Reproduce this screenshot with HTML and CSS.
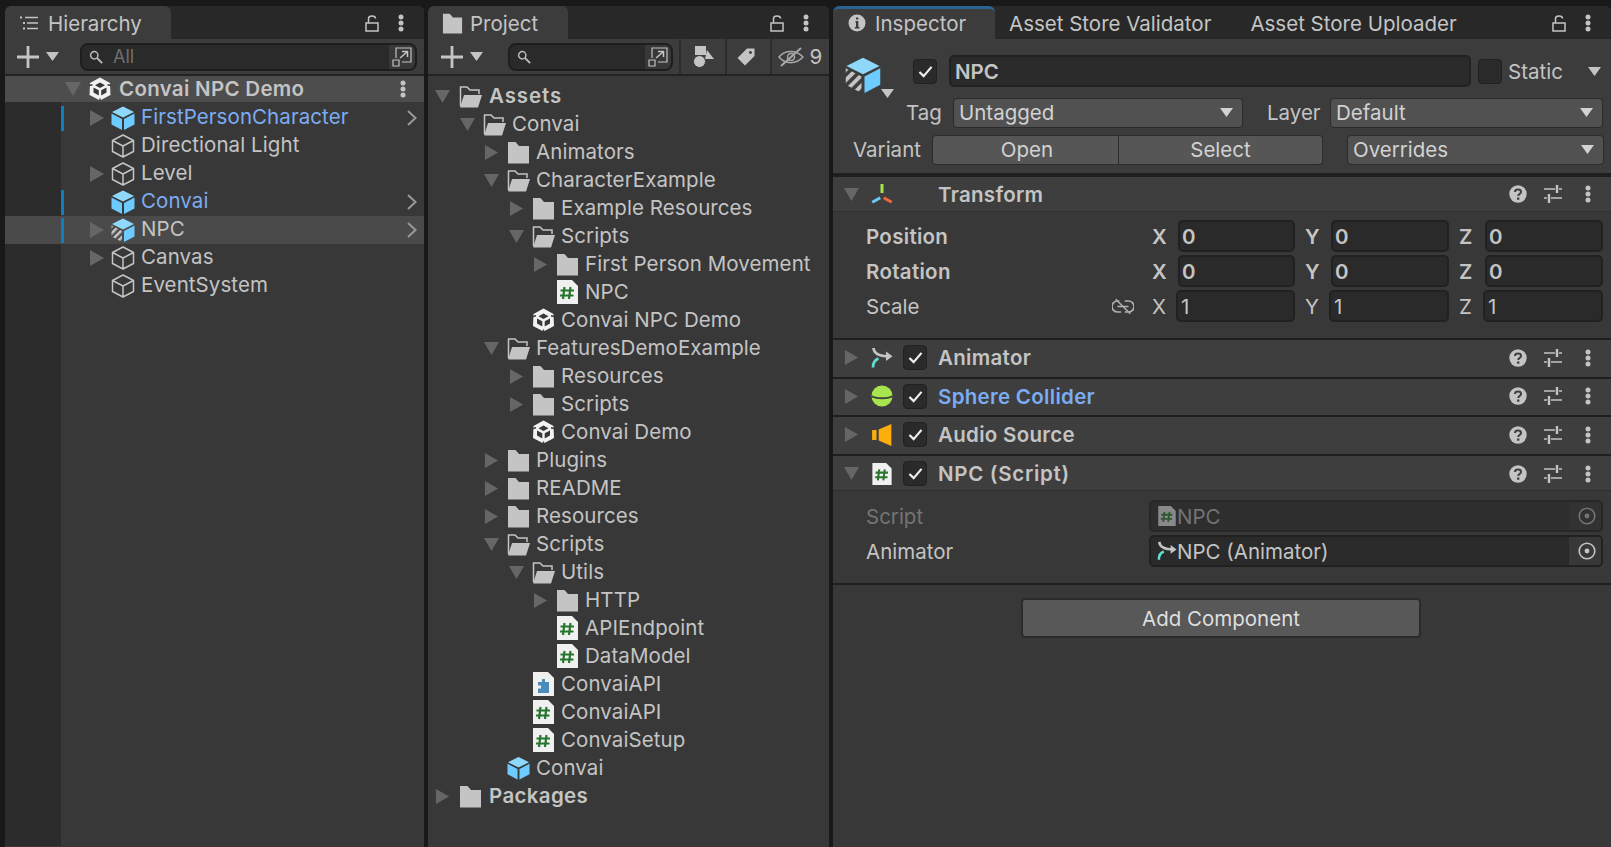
FILE: index.html
```html
<!DOCTYPE html>
<html lang="en">
<head>
  <meta charset="UTF-8">
  <title>Unity Editor</title>
  <link rel="stylesheet" href="styles.css">
</head>
<body>
  <svg class="defs" width="0" height="0">
    <defs>
      <pattern id="stripes" width="5" height="5" patternUnits="userSpaceOnUse" patternTransform="rotate(-45)">
        <rect width="5" height="2.6" fill="#c4c4c4"/>
      </pattern>
      <symbol id="cube" viewBox="0 0 24 24"><path d="M12 1 22.5 6.5V17.5L12 23 1.500 17.500V6.500ZM1.500 6.500 12 12 22.500 6.500M12 12V23" fill="none" stroke="currentColor" stroke-width="1.500" stroke-linejoin="round"/></symbol>
      <symbol id="cube-blue" viewBox="0 0 24 24"><path d="M12 .5 23 6 12 11.500 1 6Z" fill="#8ed9fb"/><path d="M.5 7.500 11 13V24L.5 18.500Z" fill="#6dcbff"/><path d="M23.500 7.500 13 13V24L23.500 18.500Z" fill="#6dcbff"/></symbol>
      <symbol id="cube-variant" viewBox="0 0 24 24"><path d="M12 .5 23 6 12 11.500 1 6Z" fill="#8ed9fb"/><path d="M.5 7.500 11 13V24L.5 18.500Z" fill="url(#stripes)"/><path d="M23.500 7.500 13 13V24L23.500 18.500Z" fill="#6dcbff"/></symbol>
      <symbol id="folder" viewBox="0 0 23 24"><path d="M1 2H8.500L12 6H22V23.500H1Z" fill="#c4c4c4"/></symbol>
      <symbol id="folder-open" viewBox="0 0 23 24"><path d="M1.500 22V3H8L11 6H20V10" fill="none" stroke="#c4c4c4" stroke-width="1.500"/><path d="M1 23.500 5 11H23L19 23.500Z" fill="#c4c4c4"/></symbol>
      <symbol id="script" viewBox="0 0 21 24"><path d="M0 0H15L21 6V24H0Z" fill="#f0f0f0"/><path d="M7.500 7 6 19M13.500 7 12 19M3.500 10.500H17M3 15.500H16.500" stroke="#27752f" stroke-width="2.200" fill="none"/></symbol>
      <symbol id="script-dim" viewBox="0 0 21 24"><path d="M0 0H15L21 6V24H0Z" fill="#8a8a8a"/><path d="M7.500 7 6 19M13.500 7 12 19M3.500 10.500H17M3 15.500H16.500" stroke="#2d5a33" stroke-width="2.200" fill="none"/></symbol>
      <symbol id="asmdef" viewBox="0 0 21 24"><path d="M0 0H15L21 6V24H0Z" fill="#f0f0f0"/><path d="M9 7H12V10H16V21H5V16.500H8V13.500H5V10H9Z" fill="#4c8cba"/></symbol>
      <symbol id="unity" viewBox="0 0 22 24"><path d="M11 .5 21 6 21.500 18 11 23.500.5 18 1 6Z" fill="#f2f2f2"/><path d="M11 5.500 6 8.300 11 11 16 8.300ZM4.500 10.500 9.800 13.300V18.500L4.500 15.500ZM17.500 10.500 12.200 13.300V18.500L17.500 15.500Z" fill="#383838"/><path d="M0 8.500 3.500 7.800M22 8.500 18.500 7.800M11 24V21.500" stroke="#383838" stroke-width="1.400"/></symbol>
      <symbol id="tri-right" viewBox="0 0 14 16"><path d="M0 0 14 8 0 16Z" fill="currentColor"/></symbol>
      <symbol id="tri-down" viewBox="0 0 16 14"><path d="M0 0H16L8 14Z" fill="currentColor"/></symbol>
      <symbol id="caret" viewBox="0 0 13 9"><path d="M0 0H13L6.500 9Z" fill="currentColor"/></symbol>
      <symbol id="chevron" viewBox="0 0 10 16"><path d="M1 1 8.500 8 1 15" fill="none" stroke="currentColor" stroke-width="2"/></symbol>
      <symbol id="kebab" viewBox="0 0 6 18"><circle cx="3" cy="3" r="2.500" fill="currentColor"/><circle cx="3" cy="9" r="2.500" fill="currentColor"/><circle cx="3" cy="15" r="2.500" fill="currentColor"/></symbol>
      <symbol id="lock" viewBox="0 0 14 18"><path d="M1 9H13V17H1ZM3.500 9V4.500C3.500 1 10.500 1 10.500 4.500" fill="none" stroke="currentColor" stroke-width="1.500"/></symbol>
      <symbol id="plus" viewBox="0 0 22 22"><path d="M11 0V22M0 11H22" stroke="currentColor" stroke-width="2.800"/></symbol>
      <symbol id="search" viewBox="0 0 16 16"><circle cx="6" cy="6" r="4.200" fill="none" stroke="currentColor" stroke-width="1.700"/><path d="M9 9 15 15" stroke="currentColor" stroke-width="2.200"/></symbol>
      <symbol id="popout" viewBox="0 0 20 20"><path d="M4 11V1H19V15H10" fill="none" stroke="currentColor" stroke-width="1.200"/><path d="M1 13H7V19H1Z" fill="none" stroke="currentColor" stroke-width="1.200"/><path d="M8 11 15 5M10 4.500H15.500V10" fill="none" stroke="currentColor" stroke-width="1.500"/></symbol>
      <symbol id="list" viewBox="0 0 18 14"><path d="M5 1.500H18M7 7H18M7 12.500H18" stroke="currentColor" stroke-width="1.500"/><path d="M0 .5H2V2.500H0ZM3 6H5V8H3ZM3 11.500H5V13.500H3Z" fill="currentColor"/></symbol>
      <symbol id="shapes" viewBox="0 0 21 22"><path d="M2 0H13V9H2Z" fill="currentColor"/><path d="M14 4 21 13H12Z" fill="currentColor"/><circle cx="6.500" cy="15.500" r="6" fill="currentColor" stroke="#3c3c3c"/></symbol>
      <symbol id="tag" viewBox="0 0 18 18"><path d="M10 .5H17.500V8L8 17.500.5 10Z" fill="currentColor"/><circle cx="13.500" cy="4.500" r="1.400" fill="#3c3c3c"/></symbol>
      <symbol id="eye-off" viewBox="0 0 26 22"><path d="M1 11C7 3.500 18 3.500 25 11 18 18.500 7 18.500 1 11Z" fill="none" stroke="currentColor" stroke-width="1.500"/><circle cx="13" cy="11" r="3.500" fill="none" stroke="currentColor" stroke-width="1.500"/><path d="M3 20 23 2" stroke="currentColor" stroke-width="2"/></symbol>
      <symbol id="info" viewBox="0 0 18 18"><circle cx="9" cy="9" r="8.500" fill="currentColor"/><path d="M7.500 7H10.300V13H11.500V14.500H6.800V13H8V8.500H7.500ZM8 3.500H10.300V5.600H8Z" fill="#3c3c3c"/></symbol>
      <symbol id="transform" viewBox="0 0 22 20"><path d="M9.500 0H12.500V9H9.500Z" fill="#a4e34a"/><path d="M.5 17 8.500 12.500 10 15 2 19.500Z" fill="#6dc9f5"/><path d="M21.500 17 13.500 12.500 12 15 20 19.500Z" fill="#f0673a"/></symbol>
      <symbol id="animator" viewBox="0 0 22 20"><path d="M2.500 0C3 6 8 8.300 18 8.300" fill="none" stroke="#c4c4c4" stroke-width="2.800"/><path d="M15 3.500 21.500 8.300 15 13Z" fill="#c4c4c4"/><path d="M2 19.500C2 15 3.500 12 7.500 10.500" fill="none" stroke="#5fe0d0" stroke-width="2.800"/></symbol>
      <symbol id="sphere" viewBox="0 0 22 22"><circle cx="11" cy="11" r="10.500" fill="#a8e44e"/><path d="M.5 11C4 14 18 14 21.500 11" fill="none" stroke="#3e3e3e" stroke-width="1.800"/></symbol>
      <symbol id="audio" viewBox="0 0 18 20"><path d="M0 5.500H4V14.500H0Z" fill="#fdae0b"/><path d="M6 5 17.500 0V20L6 15Z" fill="#fdae0b"/></symbol>
      <symbol id="help" viewBox="0 0 18 18"><circle cx="9" cy="9" r="8.700" fill="currentColor"/><path d="M6 7C6 3.800 12 3.800 12 7 12 9 9.200 9 9.200 11" fill="none" stroke="#3e3e3e" stroke-width="2"/><path d="M8 12.500H10.400V14.700H8Z" fill="#3e3e3e"/></symbol>
      <symbol id="sliders" viewBox="0 0 18 18"><path d="M0 4H11M15 4H18M0 13H3M7 13H18" stroke="currentColor" stroke-width="1.300"/><path d="M13 0V8M5 9V18" stroke="currentColor" stroke-width="2.400"/></symbol>
      <symbol id="link-off" viewBox="0 0 24 18"><path d="M8 3H6A6 6 0 0 0 6 15H10M14 15H18A6 6 0 0 0 18 3H14" fill="none" stroke="currentColor" stroke-width="1.800"/><path d="M6 9H18M4 1 20 17" stroke="currentColor" stroke-width="1.600"/></symbol>
      <symbol id="target" viewBox="0 0 18 18"><circle cx="9" cy="9" r="7.800" fill="none" stroke="currentColor" stroke-width="1.600"/><circle cx="9" cy="9" r="2.400" fill="currentColor"/></symbol>
      <symbol id="check" viewBox="0 0 16 14"><path d="M1.500 7.500 6 12 14.500 2" fill="none" stroke="#eee" stroke-width="2.400"/></symbol>
    </defs>
  </svg>

  <section class="panel hierarchy">
    <div class="tabbar">
      <div class="tab tab-h"><svg class="ic tab-ic-list"><use href="#list"/></svg>Hierarchy</div>
      <div class="tab-tools">
        <svg class="ic lock"><use href="#lock"/></svg>
        <svg class="ic kebab"><use href="#kebab"/></svg>
      </div>
    </div>
    <div class="toolbar">
      <svg class="ic plus"><use href="#plus"/></svg>
      <svg class="ic tri-sm"><use href="#caret"/></svg>
      <div class="searchbox sb-h">
        <svg class="ic search"><use href="#search"/></svg><span class="search-text">All</span>
        <div class="popout"><svg class="ic popout-ic"><use href="#popout"/></svg></div>
      </div>
    </div>
    <div class="h-tree">
      <div class="scene-row">
        <svg class="ic arrow dim"><use href="#tri-down"/></svg>
        <svg class="ic scene-ic"><use href="#unity"/></svg>
        <span class="bold">Convai NPC Demo</span>
        <svg class="ic kebab scene-kebab"><use href="#kebab"/></svg>
      </div>
      <div class="h-row"><i class="mark on"></i><svg class="ic arrow dim"><use href="#tri-right"/></svg><svg class="ic cube-ic"><use href="#cube-blue"/></svg><span class="name blue">FirstPersonCharacter</span><svg class="ic chev"><use href="#chevron"/></svg></div>
      <div class="h-row"><i class="mark"></i><span class="arrow"></span><svg class="ic cube-ic"><use href="#cube"/></svg><span class="name">Directional Light</span></div>
      <div class="h-row"><i class="mark"></i><svg class="ic arrow dim"><use href="#tri-right"/></svg><svg class="ic cube-ic"><use href="#cube"/></svg><span class="name">Level</span></div>
      <div class="h-row"><i class="mark on"></i><span class="arrow"></span><svg class="ic cube-ic"><use href="#cube-blue"/></svg><span class="name blue">Convai</span><svg class="ic chev"><use href="#chevron"/></svg></div>
      <div class="h-row hover"><i class="mark on"></i><svg class="ic arrow dim"><use href="#tri-right"/></svg><svg class="ic cube-ic"><use href="#cube-variant"/></svg><span class="name">NPC</span><svg class="ic chev"><use href="#chevron"/></svg></div>
      <div class="h-row"><i class="mark"></i><svg class="ic arrow dim"><use href="#tri-right"/></svg><svg class="ic cube-ic"><use href="#cube"/></svg><span class="name">Canvas</span></div>
      <div class="h-row"><i class="mark"></i><span class="arrow"></span><svg class="ic cube-ic"><use href="#cube"/></svg><span class="name">EventSystem</span></div>
    </div>
  </section>

  <section class="panel project">
    <div class="tabbar">
      <div class="tab tab-p"><svg class="ic tab-ic-folder"><use href="#folder"/></svg>Project</div>
      <div class="tab-tools">
        <svg class="ic lock"><use href="#lock"/></svg>
        <svg class="ic kebab"><use href="#kebab"/></svg>
      </div>
    </div>
    <div class="toolbar toolbar-p">
      <svg class="ic plus"><use href="#plus"/></svg>
      <svg class="ic tri-sm"><use href="#caret"/></svg>
      <div class="searchbox sb-p">
        <svg class="ic search"><use href="#search"/></svg>
        <div class="popout"><svg class="ic popout-ic"><use href="#popout"/></svg></div>
      </div>
      <div class="tool-btn tb-1"><svg class="ic shapes"><use href="#shapes"/></svg></div>
      <div class="tool-btn tb-2"><svg class="ic tag"><use href="#tag"/></svg></div>
      <div class="tool-btn tb-3"><svg class="ic eye"><use href="#eye-off"/></svg><span>9</span></div>
    </div>
    <div class="p-tree">
      <div class="p-row d0"><svg class="ic arrow dim"><use href="#tri-down"/></svg><svg class="ic file"><use href="#folder-open"/></svg><span class="name bold root">Assets</span></div>
      <div class="p-row d1"><svg class="ic arrow dim"><use href="#tri-down"/></svg><svg class="ic file"><use href="#folder-open"/></svg><span class="name">Convai</span></div>
      <div class="p-row d2"><svg class="ic arrow dim"><use href="#tri-right"/></svg><svg class="ic file"><use href="#folder"/></svg><span class="name">Animators</span></div>
      <div class="p-row d2"><svg class="ic arrow dim"><use href="#tri-down"/></svg><svg class="ic file"><use href="#folder-open"/></svg><span class="name">CharacterExample</span></div>
      <div class="p-row d3"><svg class="ic arrow dim"><use href="#tri-right"/></svg><svg class="ic file"><use href="#folder"/></svg><span class="name">Example Resources</span></div>
      <div class="p-row d3"><svg class="ic arrow dim"><use href="#tri-down"/></svg><svg class="ic file"><use href="#folder-open"/></svg><span class="name">Scripts</span></div>
      <div class="p-row d4"><svg class="ic arrow dim"><use href="#tri-right"/></svg><svg class="ic file"><use href="#folder"/></svg><span class="name">First Person Movement</span></div>
      <div class="p-row d4"><span class="arrow"></span><svg class="ic file"><use href="#script"/></svg><span class="name">NPC</span></div>
      <div class="p-row d3"><span class="arrow"></span><svg class="ic file"><use href="#unity"/></svg><span class="name">Convai NPC Demo</span></div>
      <div class="p-row d2"><svg class="ic arrow dim"><use href="#tri-down"/></svg><svg class="ic file"><use href="#folder-open"/></svg><span class="name">FeaturesDemoExample</span></div>
      <div class="p-row d3"><svg class="ic arrow dim"><use href="#tri-right"/></svg><svg class="ic file"><use href="#folder"/></svg><span class="name">Resources</span></div>
      <div class="p-row d3"><svg class="ic arrow dim"><use href="#tri-right"/></svg><svg class="ic file"><use href="#folder"/></svg><span class="name">Scripts</span></div>
      <div class="p-row d3"><span class="arrow"></span><svg class="ic file"><use href="#unity"/></svg><span class="name">Convai Demo</span></div>
      <div class="p-row d2"><svg class="ic arrow dim"><use href="#tri-right"/></svg><svg class="ic file"><use href="#folder"/></svg><span class="name">Plugins</span></div>
      <div class="p-row d2"><svg class="ic arrow dim"><use href="#tri-right"/></svg><svg class="ic file"><use href="#folder"/></svg><span class="name">README</span></div>
      <div class="p-row d2"><svg class="ic arrow dim"><use href="#tri-right"/></svg><svg class="ic file"><use href="#folder"/></svg><span class="name">Resources</span></div>
      <div class="p-row d2"><svg class="ic arrow dim"><use href="#tri-down"/></svg><svg class="ic file"><use href="#folder-open"/></svg><span class="name">Scripts</span></div>
      <div class="p-row d3"><svg class="ic arrow dim"><use href="#tri-down"/></svg><svg class="ic file"><use href="#folder-open"/></svg><span class="name">Utils</span></div>
      <div class="p-row d4"><svg class="ic arrow dim"><use href="#tri-right"/></svg><svg class="ic file"><use href="#folder"/></svg><span class="name">HTTP</span></div>
      <div class="p-row d4"><span class="arrow"></span><svg class="ic file"><use href="#script"/></svg><span class="name">APIEndpoint</span></div>
      <div class="p-row d4"><span class="arrow"></span><svg class="ic file"><use href="#script"/></svg><span class="name">DataModel</span></div>
      <div class="p-row d3"><span class="arrow"></span><svg class="ic file"><use href="#asmdef"/></svg><span class="name">ConvaiAPI</span></div>
      <div class="p-row d3"><span class="arrow"></span><svg class="ic file"><use href="#script"/></svg><span class="name">ConvaiAPI</span></div>
      <div class="p-row d3"><span class="arrow"></span><svg class="ic file"><use href="#script"/></svg><span class="name">ConvaiSetup</span></div>
      <div class="p-row d2"><span class="arrow"></span><svg class="ic file"><use href="#cube-blue"/></svg><span class="name">Convai</span></div>
      <div class="p-row d0"><svg class="ic arrow dim"><use href="#tri-right"/></svg><svg class="ic file"><use href="#folder"/></svg><span class="name bold root packages">Packages</span></div>
    </div>
  </section>

  <section class="panel inspector">
    <div class="tabbar">
      <div class="tab tab-i"><svg class="ic tab-ic-info"><use href="#info"/></svg>Inspector</div>
      <div class="tab-off tab-off-1">Asset Store Validator</div>
      <div class="tab-off tab-off-2">Asset Store Uploader</div>
      <div class="tab-tools">
        <svg class="ic lock"><use href="#lock"/></svg>
        <svg class="ic kebab"><use href="#kebab"/></svg>
      </div>
    </div>

    <div class="go-head">
      <div class="go-row go-name-row">
        <svg class="ic go-ic"><use href="#cube-variant"/></svg>
        <svg class="ic go-tri"><use href="#caret"/></svg>
        <div class="checkbox go-check"><svg class="ic tick"><use href="#check"/></svg></div>
        <div class="go-name">NPC</div>
        <div class="checkbox static-check"></div>
        <span class="static-label">Static</span>
        <svg class="ic tri-sm static-tri"><use href="#caret"/></svg>
      </div>
      <div class="go-row tag-row">
        <span class="tag-label">Tag</span>
        <div class="dropdown dd-tag">Untagged<svg class="ic tri-sm"><use href="#caret"/></svg></div>
        <span class="layer-label">Layer</span>
        <div class="dropdown dd-layer">Default<svg class="ic tri-sm"><use href="#caret"/></svg></div>
      </div>
      <div class="go-row variant-row">
        <span class="variant-label">Variant</span>
        <div class="btn-seg seg-open">Open</div>
        <div class="btn-seg seg-select">Select</div>
        <div class="dropdown dd-over">Overrides<svg class="ic tri-sm"><use href="#caret"/></svg></div>
      </div>
    </div>

    <div class="comp-head transform-head">
      <svg class="ic arrow dim"><use href="#tri-down"/></svg>
      <svg class="ic comp-ic"><use href="#transform"/></svg>
      <span class="comp-no-check bold">Transform</span>
      <div class="comp-tools"><svg class="ic help"><use href="#help"/></svg><svg class="ic sliders"><use href="#sliders"/></svg><svg class="ic kebab"><use href="#kebab"/></svg></div>
    </div>
    <div class="comp-body transform-body">
      <div class="prop-row">
        <span class="prop-label bold">Position</span>
        <div class="vec">
          <span class="axis bold">X</span><div class="field fx bold-num">0</div>
          <span class="axis bold ay">Y</span><div class="field fy bold-num">0</div>
          <span class="axis bold az">Z</span><div class="field fz bold-num">0</div>
        </div>
      </div>
      <div class="prop-row">
        <span class="prop-label bold">Rotation</span>
        <div class="vec">
          <span class="axis bold">X</span><div class="field fx bold-num">0</div>
          <span class="axis bold ay">Y</span><div class="field fy bold-num">0</div>
          <span class="axis bold az">Z</span><div class="field fz bold-num">0</div>
        </div>
      </div>
      <div class="prop-row">
        <span class="prop-label">Scale</span>
        <div class="vec vec-scale">
          <svg class="ic link"><use href="#link-off"/></svg>
          <span class="axis">X</span><div class="field fx">1</div>
          <span class="axis ay">Y</span><div class="field fy">1</div>
          <span class="axis az">Z</span><div class="field fz">1</div>
        </div>
      </div>
    </div>

    <div class="comp-head h-animator">
      <svg class="ic arrow dim"><use href="#tri-right"/></svg>
      <svg class="ic comp-ic"><use href="#animator"/></svg>
      <div class="checkbox comp-check"><svg class="ic tick"><use href="#check"/></svg></div>
      <span class="bold">Animator</span>
      <div class="comp-tools"><svg class="ic help"><use href="#help"/></svg><svg class="ic sliders"><use href="#sliders"/></svg><svg class="ic kebab"><use href="#kebab"/></svg></div>
    </div>
    <div class="comp-head h-sphere">
      <svg class="ic arrow dim"><use href="#tri-right"/></svg>
      <svg class="ic comp-ic"><use href="#sphere"/></svg>
      <div class="checkbox comp-check"><svg class="ic tick"><use href="#check"/></svg></div>
      <span class="bold blue">Sphere Collider</span>
      <div class="comp-tools"><svg class="ic help"><use href="#help"/></svg><svg class="ic sliders"><use href="#sliders"/></svg><svg class="ic kebab"><use href="#kebab"/></svg></div>
    </div>
    <div class="comp-head h-audio">
      <svg class="ic arrow dim"><use href="#tri-right"/></svg>
      <svg class="ic comp-ic"><use href="#audio"/></svg>
      <div class="checkbox comp-check"><svg class="ic tick"><use href="#check"/></svg></div>
      <span class="bold">Audio Source</span>
      <div class="comp-tools"><svg class="ic help"><use href="#help"/></svg><svg class="ic sliders"><use href="#sliders"/></svg><svg class="ic kebab"><use href="#kebab"/></svg></div>
    </div>
    <div class="comp-head h-script">
      <svg class="ic arrow dim"><use href="#tri-down"/></svg>
      <svg class="ic comp-ic"><use href="#script"/></svg>
      <div class="checkbox comp-check"><svg class="ic tick"><use href="#check"/></svg></div>
      <span class="bold script-title">NPC (Script)</span>
      <div class="comp-tools"><svg class="ic help"><use href="#help"/></svg><svg class="ic sliders"><use href="#sliders"/></svg><svg class="ic kebab"><use href="#kebab"/></svg></div>
    </div>
    <div class="comp-body script-body">
      <div class="prop-row">
        <span class="prop-label disabled">Script</span>
        <div class="obj-field off"><svg class="ic obj-ic"><use href="#script-dim"/></svg><span>NPC</span><div class="picker"><svg class="ic target"><use href="#target"/></svg></div></div>
      </div>
      <div class="prop-row">
        <span class="prop-label">Animator</span>
        <div class="obj-field"><svg class="ic obj-ic"><use href="#animator"/></svg><span>NPC (Animator)</span><div class="picker"><svg class="ic target"><use href="#target"/></svg></div></div>
      </div>
    </div>
    <div class="add-wrap"><div class="add-btn">Add Component</div></div>
  </section>
</body>
</html>
```

FILE: styles.css
```css
* { box-sizing: border-box; }

html, body { height: 100%; }

body {
  margin: 0;
  padding: 6px 0 0 5px;
  display: flex;
  gap: 4px;
  overflow: hidden;
  background: #191919;
  color: #c4c4c4;
  font-family: Inter, "Liberation Sans", sans-serif;
  font-size: 20.5px;
}

.defs { position: absolute; }
.ic { display: block; flex: none; }
.bold { font-weight: 600; letter-spacing: .3px; }
.blue { color: #7cacf2; }
.dim { color: #666; }
.name { letter-spacing: .08px; }

.panel { height: 841px; background: #383838; border-radius: 6px 6px 0 0; overflow: hidden; }
.hierarchy { width: 419px; }
.project { width: 401px; }
.inspector { width: 778px; }

/* tabs */
.tabbar { height: 33px; display: flex; background: #282828; }
.tab { height: 33px; display: flex; align-items: center; padding-top: 2px; background: #3c3c3c; border-radius: 6px 6px 0 0; }
.tab .ic { margin-top: -2px; }
.tab-h { width: 166px; padding-left: 15px; }
.tab-p { width: 140px; padding-left: 14px; }
.tab-i { width: 162px; padding: 0 0 1px 15px; border-top: 3px solid #2a6496; }
.tab-ic-list { width: 18px; height: 14px; margin-right: 10px; }
.tab-ic-folder { width: 21px; height: 24px; margin-right: 7px; }
.tab-ic-info { width: 18px; height: 18px; margin-right: 9px; }
.tab-off { display: flex; align-items: center; padding-top: 2px; }
.tab-off-1 { margin-left: 14px; }
.tab-off-2 { margin-left: 39px; }
.tab-tools { margin-left: auto; display: flex; align-items: center; padding-right: 20px; }
.lock { width: 14px; height: 18px; margin-right: 19px; }
.kebab { width: 6px; height: 18px; }

/* toolbars */
.toolbar { height: 37px; display: flex; align-items: center; padding-left: 12px; background: #3c3c3c; border-bottom: 2px solid #232323; }
.plus { width: 22px; height: 22px; }
.tri-sm { width: 13px; height: 9px; }
.toolbar .tri-sm { margin-left: 7px; }
.searchbox { height: 28px; display: flex; align-items: center; background: #2a2a2a; border: 2px solid #1e1e1e; border-radius: 8px; overflow: hidden; }
.sb-h { width: 337px; margin-left: 21px; }
.sb-p { width: 167px; margin-left: 25px; }
.search { width: 14px; height: 14px; margin-left: 7px; color: #bbb; }
.search-text { margin-left: 10px; color: #6f6f6f; font-size: 18px; }
.popout { margin-left: auto; width: 26px; height: 100%; display: flex; align-items: center; justify-content: center; background: #383838; }
.popout-ic { width: 20px; height: 20px; color: #c4c4c4; }
.toolbar-p { padding-left: 13px; padding-right: 0; }
.tool-btn { height: 35px; display: flex; align-items: center; justify-content: center; border-left: 2px solid #2c2c2c; }
.tb-1 { width: 46px; margin-left: 6px; }
.tb-2 { width: 45px; padding-right: 4px; }
.tb-3 { width: 60px; gap: 5px; }
.shapes { width: 21px; height: 22px; }
.tag { width: 18px; height: 18px; }
.eye { width: 26px; height: 22px; color: #a8a8a8; }

/* hierarchy tree */
.h-tree { height: 770px; background: linear-gradient(to right, #2c2c2c 56px, #383838 56px); }
.scene-row { height: 26px; margin-bottom: 2px; display: flex; align-items: center; padding-left: 60px; background: #4d4d4d; }
.scene-row .arrow { width: 16px; height: 14px; }
.scene-row .bold { margin-bottom: 1px; }
.scene-ic { width: 22px; height: 24px; margin-left: 8px; margin-right: 8px; }
.scene-kebab { margin-left: auto; margin-right: 18px; }
.h-row { height: 28px; display: flex; align-items: center; padding-left: 56px; }
.h-row.hover { background: #4a4a4a; }
.mark { width: 3px; height: 25px; margin-right: 26px; }
.mark.on { background: #0e7fc0; }
.h-row .arrow { width: 14px; height: 16px; margin-right: 7px; }
.h-row .name { margin-bottom: 3px; }
.cube-ic { width: 24px; height: 24px; margin-right: 6px; }
.chev { width: 10px; height: 16px; margin-left: auto; margin-right: 7px; color: #999; }

/* project tree */
.p-tree { padding-top: 6px; }
.p-row { height: 28px; display: flex; align-items: center; }
.p-row .arrow { width: 15px; height: 15px; margin-right: 8px; }
.p-row .name { margin-bottom: 2px; }
.file { width: 23px; height: 24px; margin-right: 6px; }
.d0 { padding-left: 7px; }
.d0 .arrow { margin-right: 9px; }
.d0 .file { margin-right: 7px; }
.d1 { padding-left: 32px; }
.d2 { padding-left: 56px; }
.d3 { padding-left: 81px; }
.d4 { padding-left: 105px; }
.root { letter-spacing: .9px; }
.packages { letter-spacing: .35px; }

/* inspector head */
.go-head { height: 138px; background: #3c3c3c; border-bottom: 4px solid #1f1f1f; padding-top: 16px; }
.go-row { display: flex; align-items: center; }
.go-name-row { height: 32px; padding-left: 12px; }
.go-ic { width: 36px; height: 36px; margin-top: 7px; }
.go-tri { width: 13px; height: 9px; margin-top: 44px; }
.checkbox { width: 24px; height: 25px; background: #2a2a2a; border: 1px solid #212121; border-radius: 4px; display: flex; align-items: center; justify-content: center; }
.tick { width: 15px; height: 13px; }
.go-check { margin-left: 19px; }
.go-name { width: 522px; height: 32px; margin-left: 12px; padding-left: 4px; display: flex; align-items: center; font-weight: 600; background: #2a2a2a; border: 2px solid #212121; border-radius: 5px; }
.static-check { margin-left: 7px; }
.static-label { margin-left: 6px; }
.static-tri { margin-left: 25px; }
.dropdown { height: 30px; display: flex; align-items: center; justify-content: space-between; padding: 0 9px 1px 5px; color: #d2d2d2; background: #515151; border: 1px solid #2b2b2b; border-radius: 4px; }
.tag-row { height: 30px; margin-top: 11px; padding-left: 73px; }
.tag-label { width: 47px; margin-bottom: 1px; }
.dd-tag { width: 290px; }
.layer-label { margin-left: 24px; width: 63px; margin-bottom: 1px; }
.dd-layer { width: 273px; }
.variant-row { height: 30px; margin-top: 7px; padding-left: 20px; }
.variant-label { width: 79px; margin-bottom: 1px; }
.btn-seg { height: 30px; display: flex; align-items: center; justify-content: center; padding-bottom: 1px; color: #d2d2d2; background: #565656; border: 1px solid #2b2b2b; }
.seg-open { width: 187px; padding-left: 3px; border-radius: 4px 0 0 4px; }
.seg-select { width: 204px; border-left: 0; border-radius: 0 4px 4px 0; }
.dd-over { width: 257px; margin-left: 24px; }

/* components */
.comp-head { display: flex; align-items: center; padding-left: 11px; background: #3e3e3e; }
.comp-head .arrow { width: 15px; height: 15px; }
.comp-ic { width: 22px; height: 22px; margin-left: 12px; }
.comp-check { margin-left: 10px; margin-right: 11px; }
.comp-no-check { margin-left: 45px; }
.comp-tools { margin-left: auto; display: flex; align-items: center; padding-right: 20px; }
.help { width: 18px; height: 18px; margin-right: 17px; }
.sliders { width: 18px; height: 18px; margin-right: 23px; }
.script-title { letter-spacing: .7px; }
.transform-head { height: 35px; border-bottom: 1px solid #303030; }
.h-animator { height: 41px; padding-bottom: 2px; border-top: 2px solid #1f1f1f; border-bottom: 2px solid #1f1f1f; }
.h-sphere { height: 38px; padding-bottom: 2px; border-bottom: 2px solid #1f1f1f; }
.h-audio { height: 39px; padding-bottom: 2px; border-bottom: 2px solid #1f1f1f; }
.h-script { height: 35px; padding-top: 1px; border-bottom: 1px solid #303030; }
.comp-body { padding-top: 8px; }
.transform-body { height: 126px; }
.script-body { height: 94px; padding-top: 9px; border-bottom: 2px solid #1f1f1f; }
.prop-row { height: 32px; margin-bottom: 3px; display: flex; align-items: center; padding-left: 33px; }
.prop-label.disabled { color: #747474; }
.link { width: 22px; height: 17px; margin-right: 19px; color: #b0b0b0; }
.vec { display: flex; align-items: center; margin-left: auto; margin-right: 8px; }
.axis { flex: none; width: 26px; margin-left: -1px; }
.ay, .az { margin-left: 10px; }
.field { flex: none; height: 32px; display: flex; align-items: center; padding-left: 2px; background: #2a2a2a; border: 2px solid #212121; border-radius: 5px; }
.fx { width: 117px; }
.fy, .fz { width: 118px; }
.bold-num { font-weight: 600; }
.vec-scale .axis { width: 24px; }
.vec-scale .field { padding-left: 3px; }
.vec-scale .fx { width: 119px; }
.vec-scale .fy, .vec-scale .fz { width: 120px; }
.obj-field { width: 454px; height: 32px; margin-left: auto; margin-right: 8px; display: flex; align-items: center; padding-left: 6px; background: #2a2a2a; border: 2px solid #212121; border-radius: 5px; overflow: hidden; }
.obj-field.off { background: #2e2e2e; border-color: #272727; color: #747474; }
.obj-ic { width: 20px; height: 20px; }
.picker { margin-left: auto; width: 32px; height: 100%; display: flex; align-items: center; justify-content: center; padding-left: 3px; background: #383838; }
.target { width: 18px; height: 18px; }
.off .picker { background: #323232; color: #747474; }
.add-wrap { display: flex; justify-content: center; padding: 13px 2px 0 0; }
.add-btn { width: 400px; height: 40px; display: flex; align-items: center; justify-content: center; color: #dedede; background: #585858; border: 2px solid #2b2b2b; border-radius: 4px; }
```
